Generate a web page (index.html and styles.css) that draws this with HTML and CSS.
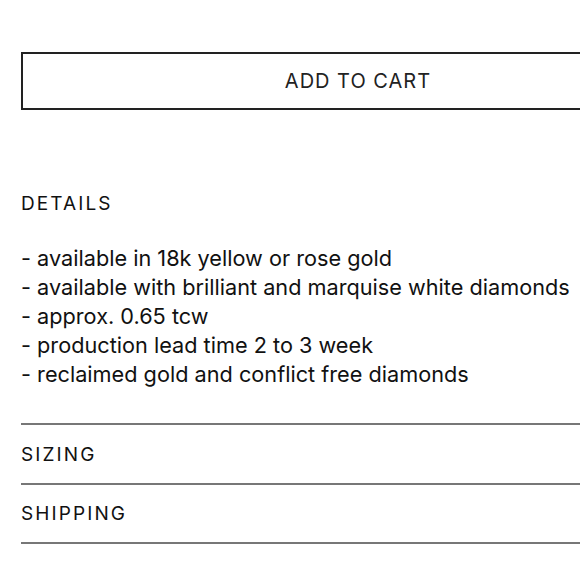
FILE: index.html
```html
<!DOCTYPE html>
<html>
<head>
<meta charset="utf-8">
<link rel="stylesheet" href="styles.css">
</head>
<body>
<div class="page">
  <button class="cart">ADD TO CART</button>
  <section class="details">
    <h2 class="heading">DETAILS</h2>
    <ul class="list">
      <li>- available in 18k yellow or rose gold</li>
      <li>- available with brilliant and marquise white diamonds</li>
      <li>- approx. 0.65 tcw</li>
      <li>- production lead time 2 to 3 week</li>
      <li>- reclaimed gold and conflict free diamonds</li>
    </ul>
  </section>
  <div class="acc"><h2 class="heading">SIZING</h2></div>
  <div class="acc"><h2 class="heading">SHIPPING</h2></div>
</div>
</body>
</html>
```
FILE: styles.css
```css
html, body {
  margin: 0;
  padding: 0;
  background: #fff;
  overflow: hidden;
}
.page {
  width: 674px;
  margin-left: 21px;
  padding-top: 52px;
  font-family: Inter, "Noto Sans", sans-serif;
  color: #111;
}
.cart {
  display: block;
  box-sizing: border-box;
  width: 100%;
  height: 58px;
  border: 2px solid #222;
  background: #fff;
  font-family: Inter, sans-serif;
  font-size: 20px;
  letter-spacing: 1px;
  color: #222;
  padding: 0;
}
.details {
  padding-top: 80px;
  padding-bottom: 34px;
  border-bottom: 2px solid #777;
}
.heading {
  margin: 0;
  font-weight: 400;
  font-size: 19px;
  letter-spacing: 2.1px;
  line-height: 28px;
}
.list {
  list-style: none;
  margin: 26px 0 0;
  padding: 0;
  font-size: 21.7px;
  line-height: 29px;
}
.acc {
  height: 55.5px;
  padding-top: 2px;
  display: flex;
  align-items: center;
  border-bottom: 2px solid #777;
}
```
